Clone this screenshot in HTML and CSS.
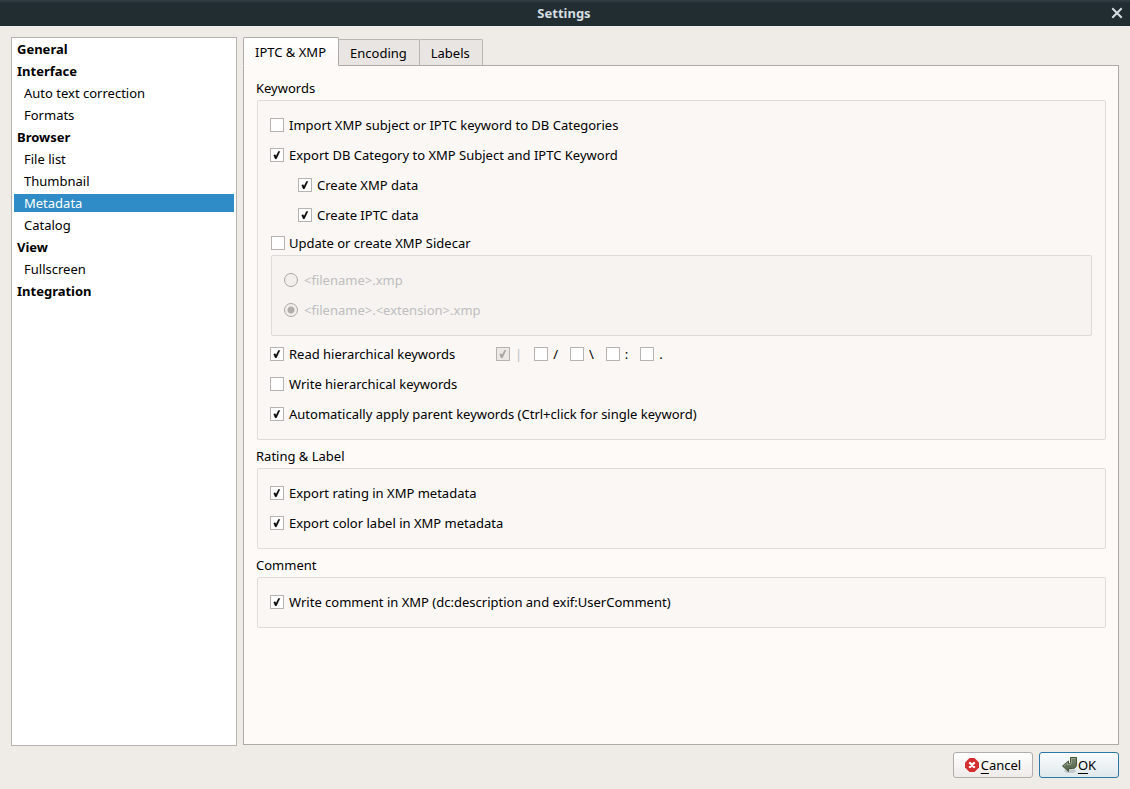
FILE: index.html
```html
<!DOCTYPE html>
<html lang="en">
<head>
  <meta charset="UTF-8" />
  <meta name="viewport" content="width=device-width, initial-scale=1.0" />
  <title>Settings</title>
  <link rel="stylesheet" href="styles.css">
</head>
<body>
  <header class="titlebar">
    <h1>Settings</h1>
    <button class="close" type="button" aria-label="Close">
      <svg width="12" height="12" viewBox="0 0 12 12"><path d="M2 2l8 8M10 2l-8 8" /></svg>
    </button>
  </header>

  <main class="content">
    <nav class="sidebar">
      <a class="top" href="#general">General</a>
      <a class="top" href="#interface">Interface</a>
      <a href="#autotext">Auto text correction</a>
      <a href="#formats">Formats</a>
      <a class="top" href="#browser">Browser</a>
      <a href="#filelist">File list</a>
      <a href="#thumbnail">Thumbnail</a>
      <a class="selected" href="#metadata">Metadata</a>
      <a href="#catalog">Catalog</a>
      <a class="top" href="#view">View</a>
      <a href="#fullscreen">Fullscreen</a>
      <a class="top" href="#integration">Integration</a>
    </nav>

    <div class="pages">
      <div class="tabs" role="tablist">
        <button class="tab active" type="button" role="tab" aria-selected="true">IPTC &amp; XMP</button>
        <button class="tab" type="button" role="tab">Encoding</button>
        <button class="tab" type="button" role="tab">Labels</button>
      </div>

      <div class="panel" role="tabpanel">
        <section>
          <h2>Keywords</h2>
          <div class="group">
            <label class="row"><input type="checkbox">Import XMP subject or IPTC keyword to DB Categories</label>
            <label class="row"><input type="checkbox" checked>Export DB Category to XMP Subject and IPTC Keyword</label>
            <label class="row nested"><input type="checkbox" checked>Create XMP data</label>
            <label class="row nested"><input type="checkbox" checked>Create IPTC data</label>

            <div class="sidecar">
              <label class="row heading"><input type="checkbox">Update or create XMP Sidecar</label>
              <div class="group">
                <label class="row disabled"><input type="radio" name="sidecar" disabled>&lt;filename&gt;.xmp</label>
                <label class="row disabled"><input type="radio" name="sidecar" checked disabled>&lt;filename&gt;.&lt;extension&gt;.xmp</label>
              </div>
            </div>

            <div class="hierarchy">
              <label class="row"><input type="checkbox" checked>Read hierarchical keywords</label>
              <div class="separators">
                <label class="row disabled"><input type="checkbox" checked disabled>|</label>
                <label class="row"><input type="checkbox">/</label>
                <label class="row"><input type="checkbox">\</label>
                <label class="row"><input type="checkbox">:</label>
                <label class="row"><input type="checkbox">.</label>
              </div>
            </div>
            <label class="row"><input type="checkbox">Write hierarchical keywords</label>
            <label class="row"><input type="checkbox" checked>Automatically apply parent keywords (Ctrl+click for single keyword)</label>
          </div>
        </section>

        <section>
          <h2>Rating &amp; Label</h2>
          <div class="group">
            <label class="row"><input type="checkbox" checked>Export rating in XMP metadata</label>
            <label class="row"><input type="checkbox" checked>Export color label in XMP metadata</label>
          </div>
        </section>

        <section>
          <h2>Comment</h2>
          <div class="group">
            <label class="row"><input type="checkbox" checked>Write comment in XMP (dc:description and exif:UserComment)</label>
          </div>
        </section>
      </div>
    </div>
  </main>

  <footer class="actions">
    <button class="btn" type="button">
      <svg width="16" height="16" viewBox="0 0 16 16">
        <path d="M4.500 1h5L14 5.500v5L9.500 15h-5L0 10.500v-5z" fill="#d42f30" />
        <path d="M5 6l4 4M9 6l-4 4" stroke="#fff" stroke-width="2.400" stroke-linecap="round" />
      </svg>
      <span><u>C</u>ancel</span>
    </button>
    <button class="btn default" type="button">
      <svg width="16" height="16" viewBox="0 0 16 16">
        <defs>
          <linearGradient id="leaf" x1="0" y1="0" x2="0" y2="1">
            <stop offset="0" stop-color="#7d8a70" />
            <stop offset="1" stop-color="#50624a" />
          </linearGradient>
        </defs>
        <ellipse cx="8" cy="14" rx="6" ry="2" fill="#000" opacity="0.150" />
        <path d="M8.500 .5h6V7q0 4.500-4 4.500H6.500V14.500L.5 9l6-5v2.500h1q1 0 1-1z" fill="url(#leaf)" stroke="#46543e" />
        <path d="M9.500 1.500h4M2 9l3.500-2.900v1.400H8q1.500 0 1.500-2V1.500" fill="none" stroke="#98a58b" />
      </svg>
      <span><u>O</u>K</span>
    </button>
  </footer>
</body>
</html>
```
FILE: styles.css
```css
:root {
  --window: #efebe7;
  --panel: #fdfaf7;
  --group: #faf7f5;
  --line: #aeaaa7;
  --soft-line: #dedbd9;
  --accent: #308cc6;
}

* {
  box-sizing: border-box;
}

body {
  margin: 0;
  min-height: 100vh;
  display: flex;
  flex-direction: column;
  background: var(--window);
  color: #000;
  font: 13px/18px "Noto Sans", sans-serif;
}

button {
  font: inherit;
  color: inherit;
}

/* Title bar */
.titlebar {
  height: 26px;
  display: grid;
  grid-template-columns: 24px 1fr 26px;
  align-items: center;
  background: linear-gradient(#344046, #222d32 3px);
  color: #d5dee1;
}

.titlebar h1 {
  grid-column: 2;
  margin: 0;
  font-size: 13px;
  text-align: center;
}

.close {
  display: flex;
  justify-content: center;
  padding: 0;
  border: 0;
  background: none;
}

.close svg {
  fill: none;
  stroke: #d5dee1;
  stroke-width: 2;
  stroke-linecap: square;
}

.content {
  flex: 1;
  display: flex;
  gap: 6px;
  padding: 11px 11px 0;
}

/* Category list */
.sidebar {
  width: 226px;
  flex-shrink: 0;
  display: flex;
  flex-direction: column;
  gap: 4px;
  padding: 2px;
  background: #fff;
  border: 1px solid #b6b3b0;
}

.sidebar a {
  padding-left: 10px;
  color: #000;
  text-decoration: none;
}

.sidebar a.top {
  padding-left: 3px;
  font-weight: bold;
}

.sidebar a.selected {
  background: var(--accent);
  color: #fff;
}

/* Tabs */
.pages {
  flex: 1;
  display: flex;
  flex-direction: column;
  padding-bottom: 1px;
}

.tabs {
  display: flex;
  align-items: flex-end;
  height: 29px;
  margin-bottom: -1px;
}

.tab {
  height: 27px;
  margin-left: -1px;
  padding: 0 12px 0 11px;
  background: #e9e5e2;
  border: 1px solid #b9b5b2;
  border-bottom-color: var(--line);
  border-radius: 2px 2px 0 0;
}

.tab.active {
  height: 29px;
  margin-left: 0;
  background: linear-gradient(#fff, var(--panel));
  border-color: var(--line);
  border-bottom-color: var(--panel);
  z-index: 1;
}

.panel {
  flex: 1;
  padding: 10px 12px;
  background: var(--panel);
  border: 1px solid var(--line);
}

.panel h2 {
  margin: 0;
  font-size: 13px;
  font-weight: normal;
  line-height: 24px;
}

.panel section + section {
  margin-top: 4px;
}

.group {
  margin-left: 1px;
  padding: 9px 12px 10px;
  background: var(--group);
  border: 1px solid var(--soft-line);
  border-radius: 2px;
}

/* Options */
.row {
  display: flex;
  align-items: center;
  gap: 5px;
  height: 30px;
}

.row.nested {
  margin-left: 28px;
}

.row.heading {
  gap: 4px;
  height: 25px;
}

.row.disabled {
  color: #bebebe;
}

.sidecar {
  margin: 0 1px 3px;
}

.sidecar .group {
  margin-left: 0;
  background: #f6f3f0;
}

.sidecar .group .row {
  gap: 6px;
}

.hierarchy {
  display: flex;
}

.hierarchy > .row {
  width: 226px;
}

.separators {
  display: flex;
  gap: 12px;
}

input {
  appearance: none;
  flex-shrink: 0;
  width: 14px;
  height: 14px;
  margin: 0;
  background: #fff;
  border: 1px solid #b6b3b0;
}

input[type="checkbox"]:checked {
  background: #fff url("data:image/svg+xml,%3Csvg xmlns='http://www.w3.org/2000/svg' viewBox='0 0 12 12'%3E%3Cpath d='M2.800 6.200L4.200 5.700L5 7.400L7.500 2.500H8.800L5.400 9.700H4.200z' stroke='%23000' stroke-width='.5'/%3E%3C/svg%3E");
}

input[type="checkbox"]:disabled {
  background: #ebe8e5 url("data:image/svg+xml,%3Csvg xmlns='http://www.w3.org/2000/svg' viewBox='0 0 12 12'%3E%3Cpath d='M2.800 6.200L4.200 5.700L5 7.400L7.500 2.500H8.800L5.400 9.700H4.200z' fill='%23a3a09e' stroke='%23a3a09e' stroke-width='.5'/%3E%3C/svg%3E");
}

input[type="radio"] {
  background: #f1eeeb;
  border-color: #aaa7a4;
  border-radius: 50%;
}

input[type="radio"]:checked {
  background: radial-gradient(circle, #b0adaa 3px, #f1eeeb 4px);
}

/* Dialog buttons */
.actions {
  display: flex;
  justify-content: flex-end;
  gap: 6px;
  padding: 6px 11px 11px;
}

.btn {
  display: flex;
  align-items: center;
  justify-content: center;
  width: 80px;
  height: 26px;
  padding: 0;
  background: linear-gradient(#fff, #eeebe9);
  border: 1px solid #b0adaa;
  border-radius: 3px;
}

.btn.default {
  background: linear-gradient(#fafcfd, #e0e8ec);
  border-color: #2a76a5;
}

.btn svg {
  fill: none;
}

.btn u {
  text-underline-offset: 3px;
}
```
